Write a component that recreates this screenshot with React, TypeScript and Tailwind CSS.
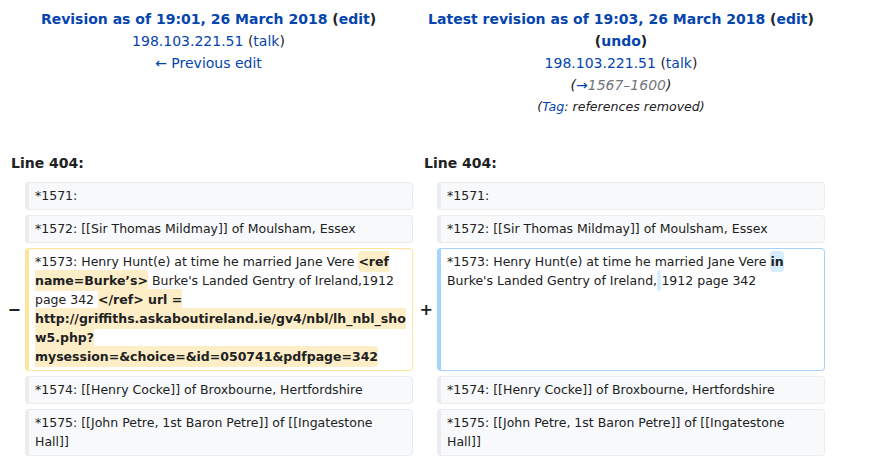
import React from 'react';

const Link: React.FC<{ children: React.ReactNode }> = ({ children }) => (
	<a className="text-[#0645ad]">{children}</a>
);

const Context: React.FC<{ children: React.ReactNode }> = ({ children }) => (
	<div className="rounded-[4px] border border-l-4 border-[#eaecf0] bg-[#f8f9fa] pl-[6px] pr-[6px] pt-[3px] pb-[4px] break-words">
		{children}
	</div>
);

const Del: React.FC<{ children: React.ReactNode }> = ({ children }) => (
	<span className="rounded-[4px] bg-[#feeec8] py-[3px] font-bold">{children}</span>
);

const Ins: React.FC<{ children: React.ReactNode }> = ({ children }) => (
	<span className="rounded-[4px] bg-[#d8ecff] py-[3px] font-bold">{children}</span>
);

const contextRows: [string, string][] = [
	['*1571:', '*1571:'],
	['*1572: [[Sir Thomas Mildmay]] of Moulsham, Essex', '*1572: [[Sir Thomas Mildmay]] of Moulsham, Essex'],
];

const contextAfter: [string, string][] = [
	['*1574: [[Henry Cocke]] of Broxbourne, Hertfordshire', '*1574: [[Henry Cocke]] of Broxbourne, Hertfordshire'],
	['*1575: [[John Petre, 1st Baron Petre]] of [[Ingatestone Hall]]', '*1575: [[John Petre, 1st Baron Petre]] of [[Ingatestone Hall]]'],
];

const App: React.FC = () => {
	return (
		<div className="w-[874px] h-[461px] overflow-hidden bg-white pl-[4px] font-['DejaVu_Sans',sans-serif] text-[#202122]">
			{/* Revision headers */}
			<div className="grid grid-cols-[409px_408px] gap-x-[4px] pt-[8px] text-center text-[14px] leading-[22px]">
				<div>
					<div className="font-bold">
						<Link>Revision as of 19:01, 26 March 2018</Link> (<Link>edit</Link>)
					</div>
					<div>
						<Link>198.103.221.51</Link> (<Link>talk</Link>)
					</div>
					<div>
						<Link>← Previous edit</Link>
					</div>
				</div>
				<div>
					<div className="font-bold">
						<Link>Latest revision as of 19:03, 26 March 2018</Link> (<Link>edit</Link>)
					</div>
					<div className="font-bold">
						(<Link>undo</Link>)
					</div>
					<div>
						<Link>198.103.221.51</Link> (<Link>talk</Link>)
					</div>
					<div className="italic">
						(<Link>→</Link>
						<span className="text-[#72777d]">1567–1600</span>)
					</div>
					<div className="text-[12.6px] italic">
						(<Link>Tag</Link>: references removed)
					</div>
				</div>
			</div>

			{/* Line numbers */}
			<div className="mt-[33px] grid grid-cols-[409px_408px] gap-x-[4px] text-[14px] font-bold leading-[19px]">
				<div className="px-[7px] pt-[3px] pb-[4px]">Line 404:</div>
				<div className="px-[7px] pt-[3px] pb-[4px]">Line 404:</div>
			</div>

			{/* Diff rows */}
			<div className="mt-[5px] grid grid-cols-[17px_388px_16px_388px] gap-x-[4px] gap-y-[5px] text-[12.5px] leading-[19px]">
				{contextRows.map(([l, r], i) => (
					<React.Fragment key={'a' + i}>
						<div />
						<Context>{l}</Context>
						<div />
						<Context>{r}</Context>
					</React.Fragment>
				))}

				<div className="flex items-center justify-end text-[16px] font-bold">−</div>
				<div className="rounded-[4px] border border-l-4 border-[#ffe49c] bg-white pl-[6px] pr-[6px] pt-[3px] pb-[4px] break-words">
					*1573: Henry Hunt(e) at time he married Jane Vere <Del>&lt;ref name=Burke’s&gt;</Del> Burke's Landed Gentry of Ireland,1912 page 342{' '}
					<Del>&lt;/ref&gt; url = http://griffiths.askaboutireland.ie/gv4/nbl/lh_nbl_show5.php?mysession=&amp;choice=&amp;id=050741&amp;pdfpage=342</Del>
				</div>
				<div className="flex items-center justify-end text-[16px] font-bold">+</div>
				<div className="rounded-[4px] border border-l-4 border-[#a3d3ff] bg-white pl-[6px] pr-[6px] pt-[3px] pb-[4px] break-words">
					*1573: Henry Hunt(e) at time he married Jane Vere <Ins>in</Ins> Burke's Landed Gentry of Ireland,<Ins> </Ins>1912 page 342
				</div>

				{contextAfter.map(([l, r], i) => (
					<React.Fragment key={'b' + i}>
						<div />
						<Context>{l}</Context>
						<div />
						<Context>{r}</Context>
					</React.Fragment>
				))}
			</div>
		</div>
	);
};

export default App;
